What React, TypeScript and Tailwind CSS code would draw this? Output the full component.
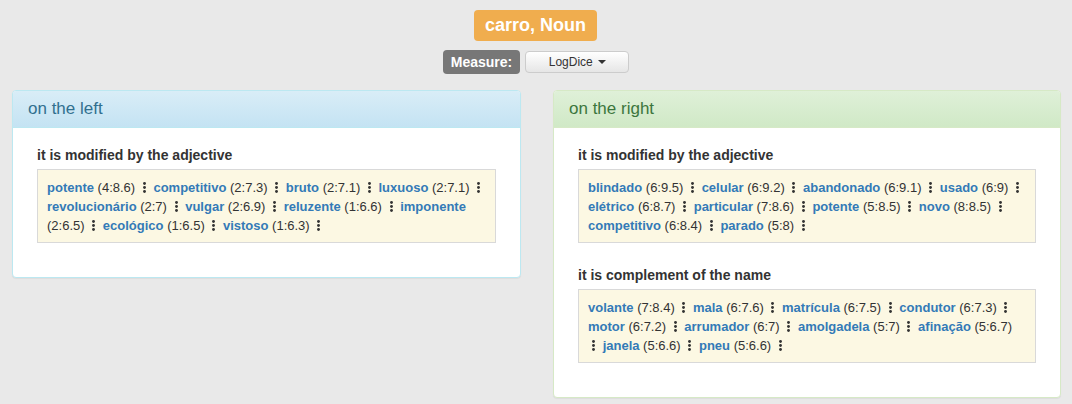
type Item = { word: string; score: string };

const leftMod: Item[] = [
  { word: "potente", score: "(4:8.6)" },
  { word: "competitivo", score: "(2:7.3)" },
  { word: "bruto", score: "(2:7.1)" },
  { word: "luxuoso", score: "(2:7.1)" },
  { word: "revolucionário", score: "(2:7)" },
  { word: "vulgar", score: "(2:6.9)" },
  { word: "reluzente", score: "(1:6.6)" },
  { word: "imponente", score: "(2:6.5)" },
  { word: "ecológico", score: "(1:6.5)" },
  { word: "vistoso", score: "(1:6.3)" },
];

const rightMod: Item[] = [
  { word: "blindado", score: "(6:9.5)" },
  { word: "celular", score: "(6:9.2)" },
  { word: "abandonado", score: "(6:9.1)" },
  { word: "usado", score: "(6:9)" },
  { word: "elétrico", score: "(6:8.7)" },
  { word: "particular", score: "(7:8.6)" },
  { word: "potente", score: "(5:8.5)" },
  { word: "novo", score: "(8:8.5)" },
  { word: "competitivo", score: "(6:8.4)" },
  { word: "parado", score: "(5:8)" },
];

const rightComp: Item[] = [
  { word: "volante", score: "(7:8.4)" },
  { word: "mala", score: "(6:7.6)" },
  { word: "matrícula", score: "(6:7.5)" },
  { word: "condutor", score: "(6:7.3)" },
  { word: "motor", score: "(6:7.2)" },
  { word: "arrumador", score: "(6:7)" },
  { word: "amolgadela", score: "(5:7)" },
  { word: "afinação", score: "(5:6.7)" },
  { word: "janela", score: "(5:6.6)" },
  { word: "pneu", score: "(5:6.6)" },
];

const Dots = () => (
  <span className="mx-[4px] inline-block align-[-1px]">
    <svg width="3" height="11" viewBox="0 0 3 11" fill="#333">
      <circle cx="1.5" cy="1.5" r="1.45" />
      <circle cx="1.5" cy="5.5" r="1.45" />
      <circle cx="1.5" cy="9.5" r="1.45" />
    </svg>
  </span>
);

const Section = ({ title, items }: { title: string; items: Item[] }) => (
  <div>
    <h4 className="text-[14px] font-bold leading-[20px] text-[#333] mb-[4px]">
      {title}
    </h4>
    <div className="border border-[#d9d9d9] bg-[#fcf8e3] px-[9px] pt-[8px] pb-[7px] text-[13px] leading-[19px] text-[#333]">
      {items.map((it, i) => (
        <span key={i}>
          <a className="font-bold text-[#337ab7] cursor-pointer">{it.word}</a>{" "}
          {it.score} <Dots />{" "}
        </span>
      ))}
    </div>
  </div>
);

const Panel = ({
  title,
  tone,
  children,
}: {
  title: string;
  tone: "info" | "success";
  children: React.ReactNode;
}) => (
  <div
    className={
      tone === "info"
        ? "self-start rounded-[4px] border border-[#bce8f1] bg-white shadow-[0_1px_1px_rgba(0,0,0,0.05)]"
        : "self-start rounded-[4px] border border-[#d6e9c6] bg-white shadow-[0_1px_1px_rgba(0,0,0,0.05)]"
    }
  >
    <div
      className={
        tone === "info"
          ? "flex h-[37px] items-center rounded-t-[3px] border-b border-[#bce8f1] bg-gradient-to-b from-[#d9edf7] to-[#c4e3f3] px-[15px] text-[17px] text-[#31708f]"
          : "flex h-[37px] items-center rounded-t-[3px] border-b border-[#d6e9c6] bg-gradient-to-b from-[#dff0d8] to-[#d0e9c6] px-[15px] text-[17px] text-[#3c763d]"
      }
    >
      {title}
    </div>
    <div className="flex flex-col gap-[22px] px-[24px] pt-[17px] pb-[34px]">
      {children}
    </div>
  </div>
);

export default function App() {
  return (
    <div
      className="min-h-[404px] w-full bg-[#e9e9e9] pt-[10px]"
      style={{ fontFamily: '"Liberation Sans", Arial, sans-serif' }}
    >
      <div className="flex justify-center">
        <span className="ml-[-1px] flex h-[31px] items-center rounded-[4px] bg-[#f0ad4e] px-[11px] text-[18px] font-bold text-white">
          carro, Noun
        </span>
      </div>
      <div className="mt-[9px] flex items-center justify-center gap-[5px]">
        <span className="flex h-[24px] items-center rounded-[4px] bg-[#777] px-[8px] text-[14px] font-bold text-white">
          Measure:
        </span>
        <button className="flex h-[22px] w-[104px] items-center justify-center gap-[5px] rounded-[4px] border border-[#ccc] bg-gradient-to-b from-white to-[#e6e6e6] text-[12px] text-[#333]">
          LogDice
          <span className="inline-block h-0 w-0 border-x-[4px] border-t-[4px] border-x-transparent border-t-[#333]" />
        </button>
      </div>
      <div className="mt-[16px] grid grid-cols-[509px_508px] gap-[32px] pl-[12px]">
        <Panel title="on the left" tone="info">
          <Section title="it is modified by the adjective" items={leftMod} />
        </Panel>
        <Panel title="on the right" tone="success">
          <Section title="it is modified by the adjective" items={rightMod} />
          <Section title="it is complement of the name" items={rightComp} />
        </Panel>
      </div>
    </div>
  );
}
